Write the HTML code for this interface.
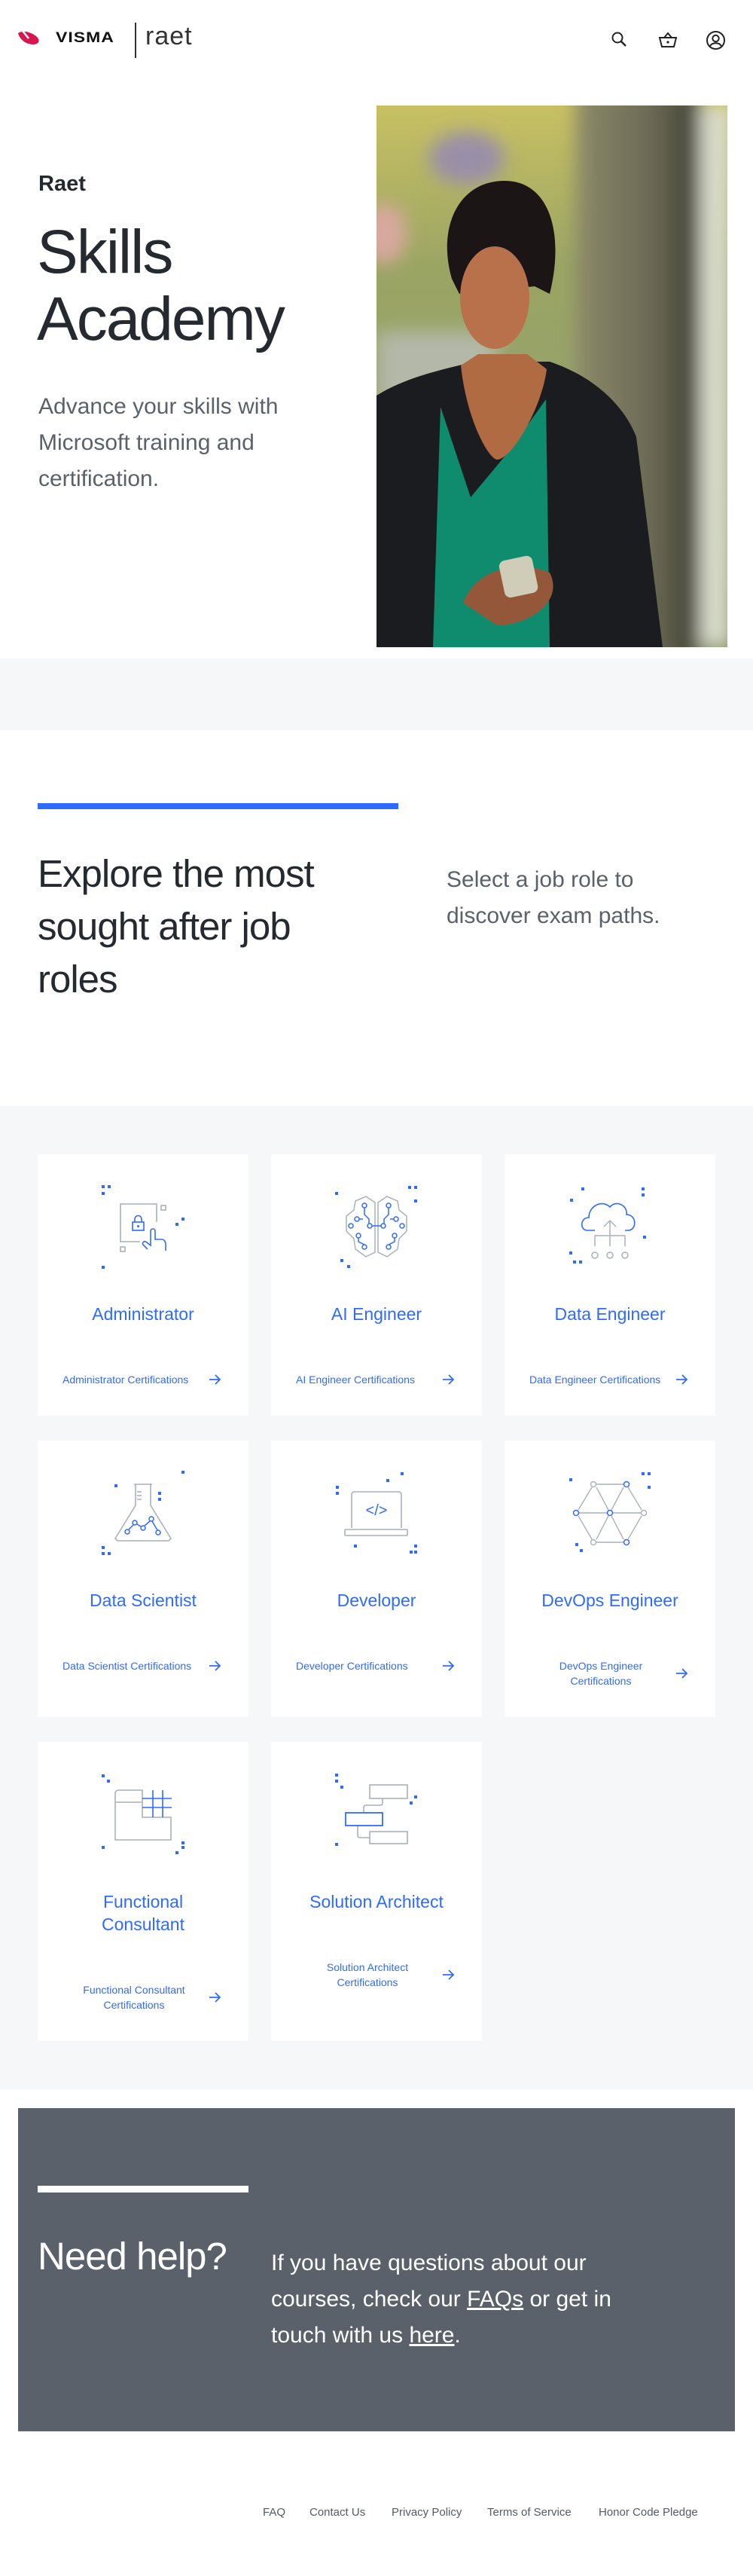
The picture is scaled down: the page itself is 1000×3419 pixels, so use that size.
<!DOCTYPE html>
<html><head><meta charset="utf-8">
<style>
*{margin:0;padding:0;box-sizing:border-box}
body{width:1000px;height:3419px;position:relative;background:#fff;font-family:"Liberation Sans",sans-serif;color:#252a31;overflow:hidden}
.abs{position:absolute}
.gray{background:#f6f7f9}
.card{position:absolute;width:280px;background:#fff;text-align:center}
.card svg.ic{position:absolute;left:60px;top:28px}
.card h3{position:absolute;left:0;right:0;font-weight:normal;font-size:23px;line-height:30px;color:#2f6bff}
.lk{position:absolute;left:33px;width:211px;display:flex;align-items:center;color:#2f6bff;font-size:14px;line-height:20px}
.lk span{max-width:190px;text-align:center}
.lk svg{margin-left:auto;flex:none}
.foot a{position:absolute;top:3326px;font-size:15px;color:#555b63;text-decoration:none}
</style></head><body>

<!-- header -->
<svg class="abs" style="left:22px;top:38px" width="34" height="24" viewBox="0 0 34 24"><path d="M2 6 C8 2 18 4 26 10 C32 15 30 21 22 21 C12 21 4 14 2 6 Z" fill="#d8154f"/><path d="M8 3 L16 13" stroke="#fff" stroke-width="2.5"/></svg>
<div class="abs" style="left:74px;top:36px;font-size:23px;line-height:26px;font-weight:900;letter-spacing:1px;color:#111;transform:scaleY(0.85);transform-origin:0 50%">VISMA</div>
<div class="abs" style="left:179px;top:30px;width:1.5px;height:47px;background:#333"></div>
<div class="abs" style="left:193px;top:28px;font-size:34px;line-height:40px;font-weight:300;color:#333;letter-spacing:1px">raet</div>
<svg class="abs" style="left:810px;top:40px" width="26" height="26" viewBox="0 0 26 26"><circle cx="10" cy="10" r="6.5" fill="none" stroke="#222" stroke-width="2"/><path d="M15 15 L21 21" stroke="#222" stroke-width="2.4"/></svg>
<svg class="abs" style="left:873px;top:40px" width="28" height="26" viewBox="0 0 28 26"><path d="M3 10 H25 L22 22 H6 Z" fill="none" stroke="#222" stroke-width="2"/><path d="M9 10 L14 4 L19 10" fill="none" stroke="#222" stroke-width="2"/><circle cx="14" cy="16" r="1.6" fill="#222"/></svg>
<svg class="abs" style="left:937px;top:40px" width="27" height="27" viewBox="0 0 27 27"><circle cx="13.5" cy="13.5" r="11.5" fill="none" stroke="#222" stroke-width="2"/><circle cx="13.5" cy="11" r="4.2" fill="none" stroke="#222" stroke-width="2"/><path d="M6 21 C9 16 18 16 21 21" fill="none" stroke="#222" stroke-width="2"/></svg>

<!-- hero -->
<div class="abs" style="left:51px;top:228px;font-size:29px;font-weight:bold;color:#252a31">Raet</div>
<div class="abs" style="left:49px;top:290px;font-size:82px;line-height:89px;letter-spacing:-2px;color:#252a31">Skills<br>Academy</div>
<div class="abs" style="left:51px;top:516px;font-size:30px;line-height:48px;color:#5a616b;width:420px">Advance your skills with Microsoft training and certification.</div>

<svg class="abs" style="left:500px;top:140px" width="466" height="719" viewBox="0 0 466 719">
<defs>
<linearGradient id="bg" x1="0" y1="0" x2="0" y2="1"><stop offset="0" stop-color="#c8c063"/><stop offset=".3" stop-color="#9aa563"/><stop offset=".7" stop-color="#93a070"/><stop offset="1" stop-color="#7f8e5c"/></linearGradient>
<linearGradient id="tr" x1="0" y1="0" x2="1" y2="0"><stop offset="0" stop-color="#8c8a6a"/><stop offset=".6" stop-color="#6b6a55"/><stop offset="1" stop-color="#3e3f33"/></linearGradient>
<filter id="bl"><feGaussianBlur stdDeviation="12"/></filter>
</defs>
<rect width="466" height="719" fill="url(#bg)"/>
<g filter="url(#bl)"><rect x="265" y="-20" width="165" height="760" fill="url(#tr)"/><rect x="430" y="0" width="40" height="719" fill="#d9dccb"/><ellipse cx="120" cy="70" rx="50" ry="35" fill="#9a8fa8"/><ellipse cx="10" cy="170" rx="30" ry="40" fill="#d9a8a0"/><rect x="0" y="300" width="160" height="200" fill="#b4b8a8"/></g>
<path d="M0 385 C40 360 90 350 130 340 L230 340 C290 360 330 400 345 440 L380 719 L0 719 Z" fill="#1b1c1f"/>
<path d="M85 400 L125 520 L175 460 L225 390 L230 719 L75 719 Z" fill="#0f8c6e"/>
<path d="M112 345 C120 420 150 470 160 470 C180 470 220 400 226 350 L200 330 L135 330 Z" fill="#b06b42"/>
<path d="M100 230 C80 160 110 100 170 100 C230 100 250 170 230 250 L210 240 L110 250 Z" fill="#1b1515"/>
<ellipse cx="157" cy="255" rx="46" ry="68" fill="#b8714a"/>
<path d="M115 660 C130 620 180 600 230 620 C250 660 200 690 160 690 Z" fill="#94573a"/>
<rect x="165" y="600" width="45" height="50" rx="8" fill="#cfcdb8" transform="rotate(-12 190 620)"/>
</svg>

<!-- gray band -->
<div class="abs gray" style="left:0;top:874px;width:1000px;height:95px"></div>

<!-- explore -->
<div class="abs" style="left:50px;top:1066px;width:479px;height:8px;background:#2f6bff"></div>
<div class="abs" style="left:50px;top:1125px;font-size:51px;line-height:70px;letter-spacing:-1px;color:#252a31;width:430px">Explore the most sought after job roles</div>
<div class="abs" style="left:593px;top:1144px;font-size:30px;line-height:48px;color:#5a616b;width:330px">Select a job role to discover exam paths.</div>

<!-- cards section -->
<div class="abs gray" style="left:0;top:1468px;width:1000px;height:1305px"></div>

<svg width="0" height="0" style="position:absolute"><defs><g id="ar"><path d="M1 8 H15 M9 2 L15 8 L9 14" fill="none" stroke="#2f6bff" stroke-width="1.8"/></g></defs></svg>

<!-- row1 -->
<div class="card" style="left:50px;top:1532px;height:347px">
<svg class="ic" width="160" height="140" viewBox="0 0 160 140"><g fill="#2f6bff"><rect x="25" y="13" width="4" height="4"/><rect x="33" y="13" width="4" height="4"/><rect x="25" y="22" width="4" height="4"/><rect x="123" y="63" width="4" height="4"/><rect x="131" y="56" width="4" height="4"/><rect x="25" y="120" width="4" height="4"/></g>
<g fill="none" stroke="#a9b1bb" stroke-width="1.6"><path d="M76 88 H50 V38 H98 V62"/><rect x="104" y="40" width="6" height="6"/><rect x="50" y="95" width="6" height="6"/></g>
<g fill="none" stroke="#2f6bff" stroke-width="1.6"><rect x="66" y="62" width="15" height="11"/><path d="M69 62 V58 A4.5 4.5 0 0 1 78 58 V62"/><path d="M86 98 L80 92 C78 89 82 86 85 89 L90 93 V74 C90 70 96 70 96 74 V85 H105 C108 85 110 88 110 92 V100"/></g><circle cx="73.5" cy="67.5" r="1.5" fill="#2f6bff"/></svg>
<h3 style="top:197px">Administrator</h3>
<div class="lk" style="top:289px"><span>Administrator Certifications</span><svg width="17" height="16"><use href="#ar"/></svg></div></div>

<div class="card" style="left:360px;top:1532px;height:347px">
<svg class="ic" width="160" height="140" viewBox="0 0 160 140"><g fill="#2f6bff"><rect x="25" y="22" width="4" height="4"/><rect x="122" y="14" width="4" height="4"/><rect x="130" y="14" width="4" height="4"/><rect x="130" y="32" width="4" height="4"/><rect x="32" y="111" width="4" height="4"/><rect x="41" y="119" width="4" height="4"/></g>
<g fill="none" stroke="#a9b1bb" stroke-width="1.5"><path d="M78 36 L66 28 L52 34 L50 46 L40 54 L40 74 L50 84 L52 98 L66 108 L78 102 Z"/><path d="M82 36 L94 28 L108 34 L110 46 L120 54 L120 74 L110 84 L108 98 L94 108 L82 102 Z"/></g>
<g fill="none" stroke="#2f6bff" stroke-width="1.5"><circle cx="64" cy="40" r="3"/><circle cx="96" cy="40" r="3"/><circle cx="54" cy="58" r="3"/><circle cx="106" cy="58" r="3"/><circle cx="46" cy="67" r="3"/><circle cx="114" cy="67" r="3"/><circle cx="71" cy="67" r="3"/><circle cx="89" cy="67" r="3"/><circle cx="56" cy="80" r="3"/><circle cx="104" cy="80" r="3"/><circle cx="64" cy="95" r="3"/><circle cx="96" cy="95" r="3"/><path d="M64 43 V52 L70 58 V64 M96 43 V52 L90 58 V64 M74 67 H86 M57 58 H62 M103 58 H98 M56 83 V88 L64 92 M104 83 V88 L96 92"/></g></svg>
<h3 style="top:197px">AI Engineer</h3>
<div class="lk" style="top:289px"><span>AI Engineer Certifications</span><svg width="17" height="16"><use href="#ar"/></svg></div></div>

<div class="card" style="left:670px;top:1532px;height:347px">
<svg class="ic" width="160" height="140" viewBox="0 0 160 140"><g fill="#2f6bff"><rect x="42" y="16" width="4" height="4"/><rect x="122" y="16" width="4" height="4"/><rect x="122" y="24" width="4" height="4"/><rect x="27" y="31" width="4" height="4"/><rect x="124" y="80" width="4" height="4"/><rect x="26" y="101" width="4" height="4"/><rect x="31" y="113" width="4" height="4"/><rect x="39" y="113" width="4" height="4"/></g>
<path d="M60 73 H50 C40 73 40 56 52 56 C52 40 70 32 80 42 C88 32 104 40 102 52 C116 52 116 73 104 73 H100" fill="none" stroke="#2f6bff" stroke-width="1.6"/>
<g fill="none" stroke="#a9b1bb" stroke-width="1.5"><path d="M80 94 V60 M72 68 L80 60 L88 68 M60 94 V80 H100 V94"/><circle cx="60" cy="106" r="4"/><circle cx="80" cy="106" r="4"/><circle cx="100" cy="106" r="4"/></g></svg>
<h3 style="top:197px">Data Engineer</h3>
<div class="lk" style="top:289px"><span>Data Engineer Certifications</span><svg width="17" height="16"><use href="#ar"/></svg></div></div>

<!-- row2 -->
<div class="card" style="left:50px;top:1912px;height:367px">
<svg class="ic" width="160" height="140" viewBox="0 0 160 140"><g fill="#2f6bff"><rect x="131" y="12" width="4" height="4"/><rect x="42" y="30" width="4" height="4"/><rect x="100" y="40" width="4" height="4"/><rect x="100" y="48" width="4" height="4"/><rect x="25" y="112" width="4" height="4"/><rect x="25" y="120" width="4" height="4"/><rect x="33" y="120" width="4" height="4"/></g>
<path d="M68 30 H92 M70 30 V58 L43 102 L46 105 H114 L117 102 L90 58 V30 M72 40 H78 M72 45 H78 M72 50 H78" fill="none" stroke="#a9b1bb" stroke-width="1.6"/>
<g fill="none" stroke="#2f6bff" stroke-width="1.5"><circle cx="59" cy="93" r="3"/><circle cx="69" cy="81" r="3"/><circle cx="80" cy="88" r="3"/><circle cx="91" cy="76" r="3"/><circle cx="100" cy="94" r="3"/><path d="M61 90 L67 84 M72 83 L77 86 M82 85 L89 79 M92 79 L99 91"/></g></svg>
<h3 style="top:197px">Data Scientist</h3>
<div class="lk" style="top:289px"><span>Data Scientist Certifications</span><svg width="17" height="16"><use href="#ar"/></svg></div></div>

<div class="card" style="left:360px;top:1912px;height:367px">
<svg class="ic" width="160" height="140" viewBox="0 0 160 140"><g fill="#2f6bff"><rect x="112" y="14" width="4" height="4"/><rect x="93" y="23" width="4" height="4"/><rect x="26" y="32" width="4" height="4"/><rect x="26" y="40" width="4" height="4"/><rect x="50" y="110" width="4" height="4"/><rect x="130" y="110" width="4" height="4"/><rect x="124" y="118" width="4" height="4"/><rect x="130" y="118" width="4" height="4"/></g>
<g fill="none" stroke="#a9b1bb" stroke-width="1.6"><path d="M47 88 V44 Q47 40 51 40 H109 Q113 40 113 44 V88"/><rect x="38" y="90" width="83" height="8" rx="1"/></g>
<text x="80" y="71" text-anchor="middle" font-family="Liberation Sans,sans-serif" font-size="20" fill="#2f6bff">&lt;/&gt;</text></svg>
<h3 style="top:197px">Developer</h3>
<div class="lk" style="top:289px"><span>Developer Certifications</span><svg width="17" height="16"><use href="#ar"/></svg></div></div>

<div class="card" style="left:670px;top:1912px;height:367px">
<svg class="ic" width="160" height="140" viewBox="0 0 160 140"><g fill="#2f6bff"><rect x="26" y="22" width="4" height="4"/><rect x="122" y="14" width="4" height="4"/><rect x="130" y="14" width="4" height="4"/><rect x="130" y="32" width="4" height="4"/><rect x="34" y="108" width="4" height="4"/><rect x="40" y="116" width="4" height="4"/></g>
<g fill="none" stroke="#a9b1bb" stroke-width="1.4"><path d="M62 30 H98 M39 68 H76 M84 68 H121 M62 107 H98 M56 34 L38 64 M62 34 L78 64 M98 34 L82 64 M104 34 L122 64 M38 72 L56 103 M78 72 L62 103 M82 72 L98 103 M122 72 L104 103"/><circle cx="58" cy="30" r="3.5"/><circle cx="125" cy="68" r="3.5"/><circle cx="58" cy="107" r="3.5"/></g>
<g fill="none" stroke="#2f6bff" stroke-width="1.5"><circle cx="102" cy="30" r="3.5"/><circle cx="35" cy="68" r="3.5"/><circle cx="80" cy="68" r="3.5"/><circle cx="102" cy="107" r="3.5"/></g></svg>
<h3 style="top:197px">DevOps Engineer</h3>
<div class="lk" style="top:289px"><span>DevOps Engineer Certifications</span><svg width="17" height="16"><use href="#ar"/></svg></div></div>

<!-- row3 -->
<div class="card" style="left:50px;top:2312px;height:397px">
<svg class="ic" width="160" height="140" viewBox="0 0 160 140"><g fill="#2f6bff"><rect x="25" y="15" width="4" height="4"/><rect x="32" y="22" width="4" height="4"/><rect x="25" y="110" width="4" height="4"/><rect x="131" y="104" width="4" height="4"/><rect x="131" y="110" width="4" height="4"/><rect x="123" y="117" width="4" height="4"/></g>
<path d="M79 36 H48 Q43 36 43 41 V102 H117 V72 H79 Z M43 52 H79" fill="none" stroke="#a9b1bb" stroke-width="1.6"/>
<path d="M93 36 V72 M106 36 V72 M79 47 H118 M79 59 H118" fill="none" stroke="#2f6bff" stroke-width="1.6"/></svg>
<h3 style="top:197px">Functional<br>Consultant</h3>
<div class="lk" style="top:319px"><span>Functional Consultant Certifications</span><svg width="17" height="16"><use href="#ar"/></svg></div></div>

<div class="card" style="left:360px;top:2312px;height:397px">
<svg class="ic" width="160" height="140" viewBox="0 0 160 140"><g fill="#2f6bff"><rect x="25" y="14" width="4" height="4"/><rect x="25" y="22" width="4" height="4"/><rect x="32" y="30" width="4" height="4"/><rect x="130" y="43" width="4" height="4"/><rect x="124" y="51" width="4" height="4"/><rect x="25" y="106" width="4" height="4"/></g>
<g fill="none" stroke="#a9b1bb" stroke-width="1.6"><rect x="71" y="29" width="50" height="18"/><rect x="71" y="91" width="50" height="16"/><path d="M88 47 V53 Q88 56 85 56 H66 Q63 56 63 59 V66 M55 83 V96 Q55 99 58 99 H71"/></g>
<rect x="39" y="66" width="49" height="17" fill="none" stroke="#2f6bff" stroke-width="1.8"/></svg>
<h3 style="top:197px">Solution Architect</h3>
<div class="lk" style="top:289px"><span>Solution Architect Certifications</span><svg width="17" height="16"><use href="#ar"/></svg></div></div>

<!-- help -->
<div class="abs" style="left:24px;top:2798px;width:952px;height:429px;background:#5a616b"></div>
<div class="abs" style="left:50px;top:2901px;width:280px;height:9px;background:#fff"></div>
<div class="abs" style="left:50px;top:2960px;font-size:51px;line-height:70px;letter-spacing:-1px;color:#fff">Need help?</div>
<div class="abs" style="left:360px;top:2980px;width:520px;font-size:30px;line-height:48px;color:#fff">If you have questions about our courses, check our <u>FAQs</u> or get in touch with us <u>here</u>.</div>

<div class="foot">
<a style="left:349px">FAQ</a><a style="left:411px">Contact Us</a><a style="left:520px">Privacy Policy</a><a style="left:647px">Terms of Service</a><a style="left:795px">Honor Code Pledge</a>
</div>
</body></html>
